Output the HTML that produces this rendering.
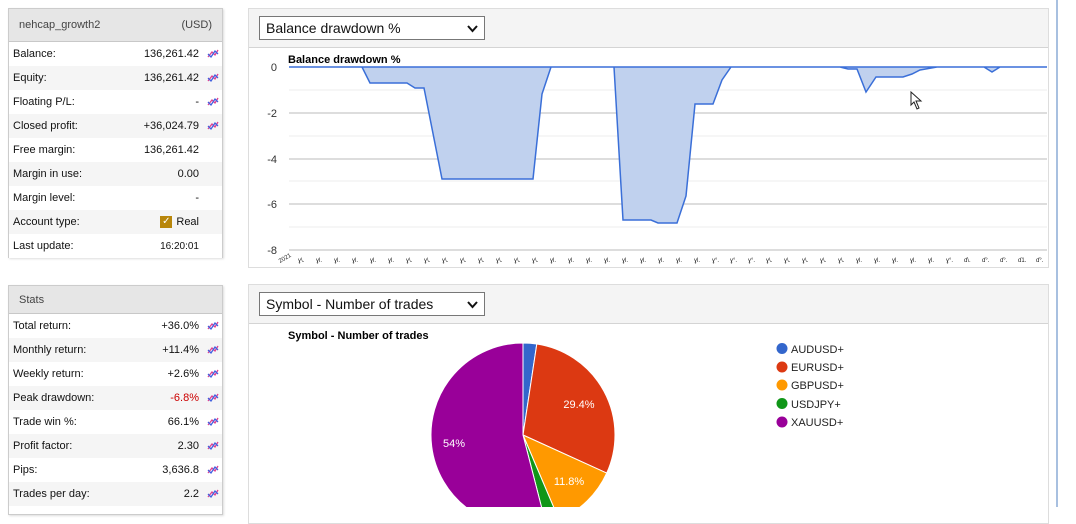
<!DOCTYPE html>
<html><head><meta charset="utf-8"><style>
*{margin:0;padding:0;box-sizing:border-box}
body{width:1076px;height:507px;overflow:hidden;background:#fff;font-family:"Liberation Sans",Arial,sans-serif;position:relative;color:#111}
.panel{position:absolute;left:8px;width:215px;border:1px solid #ccc;background:#fff;box-shadow:1px 1px 2px #ddd}
.ph{height:33px;background:#e6e6e6;border-bottom:1px solid #c8c8c8;font-size:11px;color:#444;display:flex;justify-content:space-between;align-items:center;padding:0 10px}
.row{height:24px;display:flex;align-items:center;font-size:11px;padding-left:4px;position:relative}
.row:nth-child(even){background:#fff}
.row.alt{background:#f5f5f5}
.row .v{position:absolute;right:23px}
.row svg{position:absolute;right:3px;top:6px}
.rp{position:absolute;left:248px;width:801px;border:1px solid #ddd;background:#fff}
.rh{height:39px;background:#f4f4f4;border-bottom:1px solid #d4d4d4;position:relative}
.sel{position:absolute;left:10px;top:7px;width:226px;height:24px;border:1px solid #777;background:#fff;font-size:14px;padding-left:6px;line-height:22px;color:#111}
.sel svg{position:absolute;right:6px;top:8px}
</style></head><body>
<div style="position:absolute;left:1056px;top:0;width:2px;height:507px;background:#a8c0e0"></div>

<div class="panel" style="top:8px;height:250px">
<div class="ph"><span>nehcap_growth2</span><span>(USD)</span></div>
<div class="row">Balance:<span class="v">136,261.42</span><svg width="12" height="11"><path d="M1 9 L5 4 L8 7 L11 2" stroke="#e04090" fill="none" stroke-width="1.3"/><path d="M1 6 L4 9 L8 3 L11 6" stroke="#4060e0" fill="none" stroke-width="1.3"/></svg></div>
<div class="row alt">Equity:<span class="v">136,261.42</span><svg width="12" height="11"><path d="M1 9 L5 4 L8 7 L11 2" stroke="#e04090" fill="none" stroke-width="1.3"/><path d="M1 6 L4 9 L8 3 L11 6" stroke="#4060e0" fill="none" stroke-width="1.3"/></svg></div>
<div class="row">Floating P/L:<span class="v">-</span><svg width="12" height="11"><path d="M1 9 L5 4 L8 7 L11 2" stroke="#e04090" fill="none" stroke-width="1.3"/><path d="M1 6 L4 9 L8 3 L11 6" stroke="#4060e0" fill="none" stroke-width="1.3"/></svg></div>
<div class="row alt">Closed profit:<span class="v">+36,024.79</span><svg width="12" height="11"><path d="M1 9 L5 4 L8 7 L11 2" stroke="#e04090" fill="none" stroke-width="1.3"/><path d="M1 6 L4 9 L8 3 L11 6" stroke="#4060e0" fill="none" stroke-width="1.3"/></svg></div>
<div class="row">Free margin:<span class="v">136,261.42</span></div>
<div class="row alt">Margin in use:<span class="v">0.00</span></div>
<div class="row">Margin level:<span class="v">-</span></div>
<div class="row alt">Account type:<span class="v" style="display:flex;align-items:center"><span style="display:inline-block;width:12px;height:12px;background:#b8860b;color:#fff;font-size:10px;line-height:12px;text-align:center;margin-right:4px">✓</span>Real</span></div>
<div class="row">Last update:<span class="v" style="font-size:10px">16:20:01</span></div>
</div>

<div class="panel" style="top:285px;height:230px">
<div class="ph" style="height:28px"><span>Stats</span></div>
<div class="row">Total return:<span class="v">+36.0%</span><svg width="12" height="11"><path d="M1 9 L5 4 L8 7 L11 2" stroke="#e04090" fill="none" stroke-width="1.3"/><path d="M1 6 L4 9 L8 3 L11 6" stroke="#4060e0" fill="none" stroke-width="1.3"/></svg></div>
<div class="row alt">Monthly return:<span class="v">+11.4%</span><svg width="12" height="11"><path d="M1 9 L5 4 L8 7 L11 2" stroke="#e04090" fill="none" stroke-width="1.3"/><path d="M1 6 L4 9 L8 3 L11 6" stroke="#4060e0" fill="none" stroke-width="1.3"/></svg></div>
<div class="row">Weekly return:<span class="v">+2.6%</span><svg width="12" height="11"><path d="M1 9 L5 4 L8 7 L11 2" stroke="#e04090" fill="none" stroke-width="1.3"/><path d="M1 6 L4 9 L8 3 L11 6" stroke="#4060e0" fill="none" stroke-width="1.3"/></svg></div>
<div class="row alt">Peak drawdown:<span class="v" style="color:#c00">-6.8%</span><svg width="12" height="11"><path d="M1 9 L5 4 L8 7 L11 2" stroke="#e04090" fill="none" stroke-width="1.3"/><path d="M1 6 L4 9 L8 3 L11 6" stroke="#4060e0" fill="none" stroke-width="1.3"/></svg></div>
<div class="row">Trade win %:<span class="v">66.1%</span><svg width="12" height="11"><path d="M1 9 L5 4 L8 7 L11 2" stroke="#e04090" fill="none" stroke-width="1.3"/><path d="M1 6 L4 9 L8 3 L11 6" stroke="#4060e0" fill="none" stroke-width="1.3"/></svg></div>
<div class="row alt">Profit factor:<span class="v">2.30</span><svg width="12" height="11"><path d="M1 9 L5 4 L8 7 L11 2" stroke="#e04090" fill="none" stroke-width="1.3"/><path d="M1 6 L4 9 L8 3 L11 6" stroke="#4060e0" fill="none" stroke-width="1.3"/></svg></div>
<div class="row">Pips:<span class="v">3,636.8</span><svg width="12" height="11"><path d="M1 9 L5 4 L8 7 L11 2" stroke="#e04090" fill="none" stroke-width="1.3"/><path d="M1 6 L4 9 L8 3 L11 6" stroke="#4060e0" fill="none" stroke-width="1.3"/></svg></div>
<div class="row alt">Trades per day:<span class="v">2.2</span><svg width="12" height="11"><path d="M1 9 L5 4 L8 7 L11 2" stroke="#e04090" fill="none" stroke-width="1.3"/><path d="M1 6 L4 9 L8 3 L11 6" stroke="#4060e0" fill="none" stroke-width="1.3"/></svg></div>
</div>

<div class="rp" style="top:8px;height:260px">
<div class="rh"><div class="sel">Balance drawdown %<svg width="11" height="8"><path d="M1 1 L5.5 6 L10 1" stroke="#111" stroke-width="2" fill="none"/></svg></div></div>
</div>
<div class="rp" style="top:284px;height:240px">
<div class="rh"><div class="sel">Symbol - Number of trades<svg width="11" height="8"><path d="M1 1 L5.5 6 L10 1" stroke="#111" stroke-width="2" fill="none"/></svg></div></div>
</div>

<svg style="position:absolute;left:0;top:0" width="1076" height="507">
<g font-family="Liberation Sans,Arial,sans-serif">
<text x="288" y="63" font-size="11" font-weight="bold">Balance drawdown %</text>
<g stroke="#eee" stroke-width="1">
<line x1="289" x2="1047" y1="90" y2="90"/><line x1="289" x2="1047" y1="136" y2="136"/><line x1="289" x2="1047" y1="181" y2="181"/><line x1="289" x2="1047" y1="227" y2="227"/>
</g>
<g stroke="#ddd" stroke-width="2">
<line x1="289" x2="1047" y1="113" y2="113"/><line x1="289" x2="1047" y1="159" y2="159"/><line x1="289" x2="1047" y1="204" y2="204"/><line x1="289" x2="1047" y1="250" y2="250"/>
</g>
<line x1="289" x2="1047" y1="67" y2="67" stroke="#555"/>
<path d="M289 67 L362 67 L370 83 L407 83 L415 88 L424 88 L442 179 L533 179 L542 94 L551 67 L614 67 L623 220 L651 220 L658 223 L677 223 L686 196 L695 104 L713 104 L722 80 L731 67 L840 67 L848 69 L857 69 L866 92 L876 77 L903 77 L912 74 L920 70 L937 67 L984 67 L992 72 L1000 67 L1047 67 Z" fill="#c0d1ee" stroke="#3a6fd8" stroke-width="1.5"/>
<g font-size="11" fill="#333" text-anchor="end">
<text x="277" y="71">0</text><text x="277" y="117">-2</text><text x="277" y="163">-4</text><text x="277" y="208">-6</text><text x="277" y="254">-8</text>
</g>
<g font-size="6" fill="#222">
<text x="280" y="263" transform="rotate(-30 280 263)">2021</text>
<text x="298" y="262">ɣ\.</text><text x="316" y="262">ɣl.</text><text x="334" y="262">ɣl.</text><text x="352" y="262">ɣl.</text><text x="370" y="262">ɣl.</text><text x="388" y="262">ɣl.</text><text x="406" y="262">ɣ\.</text><text x="424" y="262">ɣ\.</text><text x="442" y="262">ɣ\.</text><text x="460" y="262">ɣ\.</text><text x="478" y="262">ɣ\.</text><text x="496" y="262">ɣ\.</text><text x="514" y="262">ɣ\.</text><text x="532" y="262">ɣ\.</text><text x="550" y="262">ɣl.</text><text x="568" y="262">ɣl.</text><text x="586" y="262">ɣl.</text><text x="604" y="262">ɣl.</text><text x="622" y="262">ɣl.</text><text x="640" y="262">ɣl.</text><text x="658" y="262">ɣl.</text><text x="676" y="262">ɣl.</text><text x="694" y="262">ɣl.</text><text x="712" y="262">ɣ°.</text><text x="730" y="262">ɣ°.</text><text x="748" y="262">ɣ°.</text><text x="766" y="262">ɣ\.</text><text x="784" y="262">ɣ\.</text><text x="802" y="262">ɣ\.</text><text x="820" y="262">ɣ\.</text><text x="838" y="262">ɣ\.</text><text x="856" y="262">ɣl.</text><text x="874" y="262">ɣl.</text><text x="892" y="262">ɣl.</text><text x="910" y="262">ɣl.</text><text x="928" y="262">ɣl.</text><text x="946" y="262">ɣ°.</text><text x="964" y="262">ɗ\.</text><text x="982" y="262">ɗ°.</text><text x="1000" y="262">ɗ°.</text><text x="1018" y="262">ɗ1.</text><text x="1036" y="262">ɗ°.</text>
</g>

<text x="288" y="339" font-size="11" font-weight="bold">Symbol - Number of trades</text>
<g stroke="#fff" stroke-width="1">
<path d="M523 435 L523 343 A92 92 0 0 1 536.8 344 Z" fill="#3366cc"/>
<path d="M523 435 L536.8 344 A92 92 0 0 1 606.7 473.1 Z" fill="#dc3912"/>
<path d="M523 435 L606.7 473.1 A92 92 0 0 1 559 519.7 Z" fill="#ff9900"/>
<path d="M523 435 L559 519.7 A92 92 0 0 1 545.9 524.1 Z" fill="#109618"/>
<path d="M523 435 L545.9 524.1 A92 92 0 1 1 523 343 Z" fill="#990099"/>
</g>
<g font-size="11" fill="#fff" text-anchor="middle">
<text x="579" y="408">29.4%</text><text x="569" y="485">11.8%</text><text x="454" y="447">54%</text>
</g>
<g font-size="11" fill="#222">
<circle cx="782" cy="348.5" r="5.5" fill="#3366cc"/><text x="791" y="353">AUDUSD+</text>
<circle cx="782" cy="367" r="5.5" fill="#dc3912"/><text x="791" y="371">EURUSD+</text>
<circle cx="782" cy="385" r="5.5" fill="#ff9900"/><text x="791" y="389">GBPUSD+</text>
<circle cx="782" cy="403.5" r="5.5" fill="#109618"/><text x="791" y="408">USDJPY+</text>
<circle cx="782" cy="422" r="5.5" fill="#990099"/><text x="791" y="426">XAUUSD+</text>
</g>
<path d="M911 92 L911 105 L914 102 L917 109 L919 108 L916 101 L921 101 Z" fill="#fff" stroke="#222" stroke-width="1"/>
</g>
</svg>
</body></html>
